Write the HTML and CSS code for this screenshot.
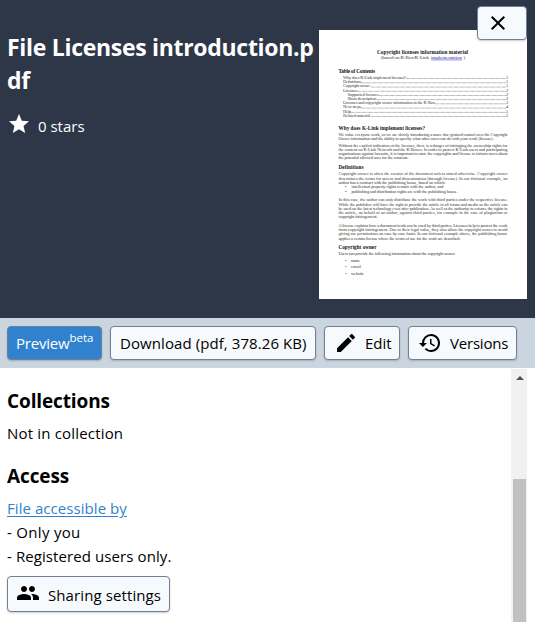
FILE: index.html
```html
<!DOCTYPE html>
<html lang="en">
<head>
<meta charset="utf-8">
<title>File Licenses introduction.pdf</title>
<link rel="stylesheet" href="styles.css">
</head>
<body>
<div class="panel">
  <header class="header">
    <div class="summary">
      <h1 class="title">File Licenses introduction.pdf</h1>
      <div class="stars">
        <svg class="icon" viewBox="0 0 24 24"><path d="M12 17.27L18.18 21l-1.64-7.03L22 9.24l-7.19-.61L12 2 9.19 8.63 2 9.24l5.46 4.73L5.82 21z"/></svg>
        <span class="stars-label">0 stars</span>
      </div>
    </div>
    <svg class="thumb" viewBox="0 0 208 269">
      <g class="doc-bold">
        <text x="58" y="23.6" textLength="91">Copyright licenses information material</text>
        <text x="19.5" y="42.7" textLength="36.5">Table of Contents</text>
        <text x="19.5" y="100.4" textLength="86.5">Why does K-Link implement licenses?</text>
        <text x="19.5" y="139.1" textLength="25">Definitions</text>
        <text x="19.5" y="218.9" textLength="38">Copyright owner</text>
      </g>
      <g class="doc-text">
        <text class="doc-sub" x="62" y="28.7" textLength="48">(based on K-Box/K-Link</text>
        <text class="doc-link" x="112" y="28.7" textLength="31">implementation</text>
        <text class="doc-sub" x="144.5" y="28.7">)</text>
        <text x="24" y="48.7" textLength="63">Why does K-Link implement licenses?</text><text x="187" y="48.7">1</text>
        <text x="24" y="53" textLength="18">Definitions</text><text x="187" y="53">1</text>
        <text x="24" y="57.3" textLength="27">Copyright owner</text><text x="187" y="57.3">1</text>
        <text x="24" y="61.5" textLength="14">Licenses</text><text x="187" y="61.5">2</text>
        <text x="28.5" y="65.7" textLength="31">Supported licenses</text><text x="187" y="65.7">2</text>
        <text x="28.5" y="69.8" textLength="29">Short description</text><text x="187" y="69.8">2</text>
        <text x="24" y="74" textLength="92">Licenses and copyright owner information in the K-Box</text><text x="187" y="74">3</text>
        <text x="24" y="78.3" textLength="18">Next steps</text><text x="187" y="78.3">4</text>
        <text x="24" y="82.6" textLength="8">Help</text><text x="187" y="82.6">5</text>
        <text x="24" y="86.7" textLength="27">Related material</text><text x="187" y="86.7">5</text>
        <text x="19.5" y="106.3" textLength="169">We value everyone work, so we are slowly introducing a more fine-grained control over the Copyright</text>
        <text x="19.5" y="110.3" textLength="155">Owner information and the ability to specify what other users can do with your work (license).</text>
        <text x="19.5" y="116.7" textLength="169">Without the explicit indication of the licenses, there is a danger of infringing the ownership rights for</text>
        <text x="19.5" y="121" textLength="169">the content on K-Link Network and the K-Boxes. In order to protect K-Link users and participating</text>
        <text x="19.5" y="125" textLength="169">organisations against lawsuits, it is important to state the copyrights and license to inform users about</text>
        <text x="19.5" y="129.3" textLength="70">the potential allowed uses for the contents.</text>
        <text x="19.5" y="145.3" textLength="169">Copyright owner is often the creator of the document unless stated otherwise. Copyright owner</text>
        <text x="19.5" y="149.5" textLength="169">determines the terms for access and dissemination (through license). In our fictional example, an</text>
        <text x="19.5" y="153.7" textLength="107">author has a contract with the publishing house, based on which:</text>
        <text x="26" y="158.3">•</text><text x="32.5" y="158.3" textLength="92">intellectual property rights remain with the author, and</text>
        <text x="26" y="162.7">•</text><text x="32.5" y="162.7" textLength="106">publishing and distribution rights are with the publishing house.</text>
        <text x="19.5" y="171.2" textLength="169">In this case, the author can only distribute the work with third parties under the respective license.</text>
        <text x="19.5" y="175.5" textLength="169">While the publisher will have the right to provide the article in all forms and media so the article can</text>
        <text x="19.5" y="179.8" textLength="169">be used on the latest technology even after publication. As well as the authority to enforce the rights in</text>
        <text x="19.5" y="184" textLength="169">the article, on behalf of an author, against third parties, for example in the case of plagiarism or</text>
        <text x="19.5" y="188.3" textLength="39">copyright infringement.</text>
        <text x="19.5" y="197" textLength="169">A license explains how a document/work can be used by third parties. Licenses help to protect the work</text>
        <text x="19.5" y="201.2" textLength="169">from copyright infringement. Due to their legal value, they also allow the copyright owner to avoid</text>
        <text x="19.5" y="205.4" textLength="169">giving use permissions on case by case basis. In our fictional example above, the publishing house</text>
        <text x="19.5" y="209.5" textLength="122">applies a certain license where the terms of use for the work are described.</text>
        <text x="19.5" y="224.7" textLength="117">Users can provide the following information about the copyright owner:</text>
        <text x="26" y="231.7">•</text><text x="32" y="231.7" textLength="9">name</text>
        <text x="26" y="238.3">•</text><text x="32" y="238.3" textLength="10">email</text>
        <text x="26" y="245.3">•</text><text x="32" y="245.3" textLength="13">website</text>
      </g>
      <path class="leaders" d="M87 48.5H187M42 52.8H187M52 57.1H187M38 61.3H187M60 65.5H187M58 69.6H187M116 73.8H187M42 78.1H187M32 82.4H187M52 86.5H187"/>
    </svg>
    <button class="btn close" aria-label="Close"><svg class="icon" viewBox="0 0 24 24"><path d="M19 6.41L17.59 5 12 10.59 6.41 5 5 6.41 10.59 12 5 17.59 6.41 19 12 13.41 17.59 19 19 17.59 13.41 12z"/></svg></button>
  </header>
  <nav class="actions">
    <button class="btn primary">Preview<sup>beta</sup></button>
    <button class="btn download">Download (pdf, 378.26 KB)</button>
    <button class="btn edit"><svg class="icon" viewBox="0 0 24 24"><path d="M3 17.25V21h3.75L17.81 9.94l-3.75-3.75L3 17.25zM20.71 7.04a1 1 0 0 0 0-1.41l-2.34-2.34a1 1 0 0 0-1.41 0l-1.83 1.83 3.75 3.75 1.83-1.83z"/></svg><span>Edit</span></button>
    <button class="btn versions"><svg class="icon" viewBox="0 0 24 24"><path d="M13 3a9 9 0 0 0-9 9H1l3.89 3.89.07.14L9 12H6a7 7 0 1 1 7 7c-1.93 0-3.68-.79-4.94-2.06l-1.42 1.42A9 9 0 1 0 13 3zm-1 5v5l4.28 2.54.72-1.21-3.5-2.08V8H12z"/></svg><span>Versions</span></button>
  </nav>
  <div class="body">
    <main class="content">
      <h2 class="collections">Collections</h2>
      <p class="none">Not in collection</p>
      <h2 class="access">Access</h2>
      <p><a class="link" href="#">File accessible by</a></p>
      <p class="only">- Only you</p>
      <p class="registered">- Registered users only.</p>
      <button class="btn sharing"><svg class="icon" viewBox="0 0 24 24"><path d="M16 11c1.66 0 2.99-1.34 2.99-3S17.66 5 16 5s-3 1.34-3 3 1.34 3 3 3zm-8 0c1.66 0 2.99-1.34 2.99-3S9.66 5 8 5 5 6.34 5 8s1.34 3 3 3zm0 2c-2.33 0-7 1.17-7 3.5V19h14v-2.5C15 14.17 10.33 13 8 13zm8 0c-.29 0-.62.02-.97.05 1.16.84 1.97 1.97 1.97 3.45V19h6v-2.5c0-2.33-4.67-3.5-7-3.5z"/></svg><span>Sharing settings</span></button>
    </main>
    <div class="scrollbar"><span class="arrow"></span><span class="handle"></span></div>
  </div>
</div>
</body>
</html>
```

FILE: styles.css
```css
* { box-sizing: border-box; }
body { margin: 0; background: #fff; color: #000; font: 15px/24px "Open Sans", "Noto Sans", sans-serif; }
h1, h2, p { margin: 0; }
.panel { display: flex; flex-direction: column; height: 622px; overflow: hidden; }
.icon { width: 24px; height: 24px; fill: currentColor; flex: none; }

.header { position: relative; display: flex; flex: none; height: 318px; padding: 30px 8px 0 7px; background: #2d3748; color: #fff; }
.summary { width: 312px; flex: none; }
.title { font-size: 23px; line-height: 33px; font-weight: 700; letter-spacing: -.3px; word-break: break-all; padding-top: 1px; }
.stars { display: flex; margin-top: 15px; }
.stars-label { margin: 2px 0 0 7px; }
.thumb { width: 208px; height: 269px; background: #fff; flex: none; }
.doc-bold, .doc-text { font-family: "Liberation Serif", serif; }
.doc-bold { font-size: 5.2px; font-weight: 700; fill: #111; }
.doc-text { font-size: 4.4px; fill: #333; }
.doc-sub, .doc-link { font-size: 5px; }
.doc-link { fill: #2525b5; text-decoration: underline; }
.leaders { fill: none; stroke: #555; stroke-width: .6; stroke-dasharray: .7 .5; }

.btn { display: flex; align-items: center; height: 34px; padding: 0 9px; background: #f7fafc; border: 1px solid #718096; border-radius: 4px; box-shadow: 0 1px 2px rgba(0, 0, 0, .2); color: #000; font: inherit; white-space: nowrap; flex: none; }
.close { position: absolute; right: 8px; top: 6px; width: 50px; padding: 0 8px; }

.actions { display: flex; flex: none; gap: 8px; height: 50px; padding: 8px 7px; background: #cbd5e0; }
.primary { width: 95px; padding: 0 8px; background: #3182ce; color: #fff; letter-spacing: -.2px; }
.primary sup { font-size: 11.5px; line-height: 0; position: relative; top: -5px; vertical-align: baseline; letter-spacing: 0; }
.download { width: 206px; letter-spacing: .08px; }
.edit { width: 76px; }
.versions { width: 109px; letter-spacing: -.2px; }
.edit .icon { margin-right: 7px; }
.versions .icon { margin-right: 8px; }

.body { display: flex; flex: 1; min-height: 0; padding: 1px 8px 0 7px; }
.content { flex: 1; padding-top: 20px; }
h2 { font-size: 19px; line-height: 24px; font-weight: 700; letter-spacing: -.12px; }
.none { margin-top: 8px; letter-spacing: .18px; }
.access { margin: 19px 0 8px; }
.link { color: #3182ce; text-decoration: underline; text-underline-offset: 2px; letter-spacing: .06px; }
.only { letter-spacing: .3px; }
.registered { letter-spacing: .09px; }
.sharing { width: 163px; height: 36px; margin-top: 8px; padding: 0 8px; letter-spacing: .1px; }
.sharing .icon { margin: -3px 8px 0 0; }
.sharing span { margin-top: 2px; }
.scrollbar { display: flex; flex-direction: column; align-items: center; width: 16px; background: #f1f1f1; }
.arrow { margin: 7px 0 0 1px; border: 4px solid transparent; border-top: 0; border-bottom: 4px solid #505050; }
.handle { width: 13px; flex: 1; margin: 99px 0 0 1px; background: #c1c1c1; }
```
